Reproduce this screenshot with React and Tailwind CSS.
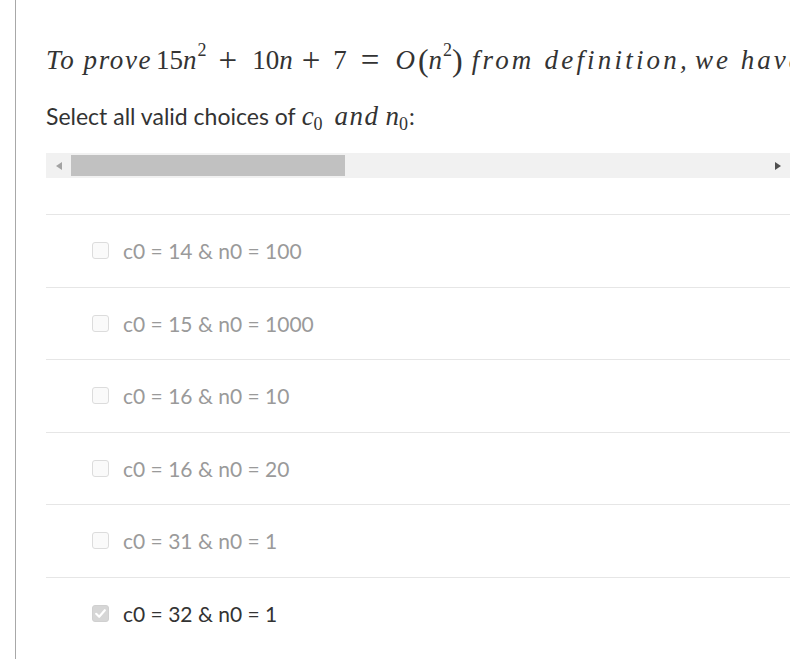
import React from 'react';

const OPTIONS = [
  { label: 'c0 = 14 & n0 = 100', checked: false },
  { label: 'c0 = 15 & n0 = 1000', checked: false },
  { label: 'c0 = 16 & n0 = 10', checked: false },
  { label: 'c0 = 16 & n0 = 20', checked: false },
  { label: 'c0 = 31 & n0 = 1', checked: false },
  { label: 'c0 = 32 & n0 = 1', checked: true },
];

const serif = { fontFamily: '"Liberation Serif", "DejaVu Serif", serif' };
const lato = { fontFamily: 'Lato, "Open Sans", sans-serif' };

function Checkbox({ checked }) {
  if (checked) {
    return (
      <span className="w-[17px] h-[17px] rounded-[3px] bg-[#d6d6d6] border border-[#d0d0d0] flex items-center justify-center shrink-0">
        <svg width="13" height="13" viewBox="0 0 12 12" aria-hidden>
          <path d="M2 6.3 L4.8 9 L10 3" fill="none" stroke="#fff" strokeWidth="2" strokeLinecap="round" strokeLinejoin="round" />
        </svg>
      </span>
    );
  }
  return <span className="w-[17px] h-[17px] rounded-[3px] bg-[#fafafa] border border-[#dcdcdc] shrink-0" />;
}

function Sup({ children }) {
  return <span className="relative -top-[10px] text-[18px] ml-[1px]">{children}</span>;
}

function MathLine() {
  return (
    <div
      className="h-[40px] flex items-center whitespace-nowrap overflow-hidden text-[27px] text-[#333] leading-none"
      style={serif}
    >
      <i className="tracking-[1.6px]">To prove</i>
      <span className="ml-[4px]">15</span>
      <i>n</i>
      <Sup>2</Sup>
      <span className="ml-[12px] mr-[15px] text-[33px]">+</span>
      <span>10</span>
      <i>n</i>
      <span className="ml-[9px] mr-[13px] text-[33px]">+</span>
      <span>7</span>
      <span className="ml-[14px] mr-[16px] text-[33px]">=</span>
      <i>O</i>
      <span className="ml-[3px] text-[32px]">(</span>
      <i>n</i>
      <Sup>2</Sup>
      <span className="text-[32px]">)</span>
      <i className="ml-[9px] tracking-[3.2px]">from definition,</i>
      <i className="ml-[5px] tracking-[3px]">we have</i>
    </div>
  );
}

function Scrollbar() {
  return (
    <div className="h-[25px] bg-[#f1f1f1] flex items-center">
      <div className="w-[25px] h-full flex items-center justify-center">
        <svg width="6" height="8" viewBox="0 0 6 8" aria-hidden>
          <path d="M6 0 L0 4 L6 8 Z" fill="#a3a3a3" />
        </svg>
      </div>
      <div className="w-[274px] h-[21px] bg-[#c1c1c1]" />
      <div className="flex-1" />
      <div className="w-[25px] h-full flex items-center justify-center">
        <svg width="6" height="8" viewBox="0 0 6 8" aria-hidden>
          <path d="M0 0 L6 4 L0 8 Z" fill="#505050" />
        </svg>
      </div>
    </div>
  );
}

export default function App() {
  return (
    <div className="w-[803px] h-[659px] overflow-hidden bg-white pl-[15px]">
      <div className="h-full border-l border-[#a8a8a8] pl-[30px] pr-[13px] pt-[40px]">
        <MathLine />
        <div className="mt-[21px] h-[30px] flex items-center text-[23px] text-[#333] whitespace-nowrap" style={lato}>
          <span>Select all valid choices of</span>
          <span className="ml-[6px] text-[27px]" style={serif}>
            <i>c</i>
            <span className="relative top-[5px] text-[18px]">0</span>
            <i className="ml-[12px] tracking-[1.5px]">and</i>
            <i className="ml-[6px]">n</i>
            <span className="relative top-[5px] text-[18px]">0</span>
          </span>
          <span className="ml-[1px]">:</span>
        </div>
        <div className="mt-[22px]">
          <Scrollbar />
        </div>
        <div className="mt-[36px]" style={lato}>
          {OPTIONS.map((o) => (
            <div key={o.label} className="h-[72.5px] border-t border-[#e6e6e6] flex items-center pl-[46px] gap-[14px]">
              <Checkbox checked={o.checked} />
              <span className={`text-[21px] ${o.checked ? 'text-[#333]' : 'text-[#9a9a9a]'}`}>{o.label}</span>
            </div>
          ))}
        </div>
      </div>
    </div>
  );
}
